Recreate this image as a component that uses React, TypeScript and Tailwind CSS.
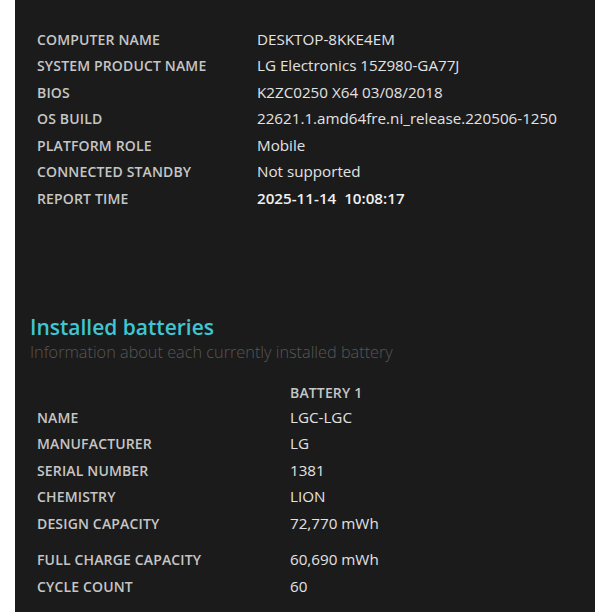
import React from 'react';

const systemInfo: [string, string][] = [
  ['COMPUTER NAME', 'DESKTOP-8KKE4EM'],
  ['SYSTEM PRODUCT NAME', 'LG Electronics 15Z980-GA77J'],
  ['BIOS', 'K2ZC0250 X64 03/08/2018'],
  ['OS BUILD', '22621.1.amd64fre.ni_release.220506-1250'],
  ['PLATFORM ROLE', 'Mobile'],
  ['CONNECTED STANDBY', 'Not supported'],
];

const batteryInfo: [string, string][] = [
  ['NAME', 'LGC-LGC'],
  ['MANUFACTURER', 'LG'],
  ['SERIAL NUMBER', '1381'],
  ['CHEMISTRY', 'LION'],
  ['DESIGN CAPACITY', '72,770 mWh'],
];

const batteryInfo2: [string, string][] = [
  ['FULL CHARGE CAPACITY', '60,690 mWh'],
  ['CYCLE COUNT', '60'],
];

function Row({ label, value, labelWidth, bold }: { label: string; value: string; labelWidth: string; bold?: boolean }) {
  return (
    <div className="flex items-center h-[26.5px]">
      <div className={`${labelWidth} shrink-0 text-[14px] font-semibold text-[#c6c6c6] tracking-[0.15px]`}>{label}</div>
      <div className={`text-[15.2px] whitespace-pre ${bold ? 'font-semibold text-[#f0f0f0]' : 'text-[#e2e2e2]'}`}>{value}</div>
    </div>
  );
}

export default function App() {
  return (
    <div className="w-[612px] h-[612px] bg-white overflow-hidden" style={{ fontFamily: '"Open Sans", "Noto Sans", sans-serif' }}>
      <div className="ml-[15px] w-[580px] h-full bg-[#1b1b1b] pt-[26px]">
        {/* system info */}
        <div className="pl-[22px]">
          {systemInfo.map(([l, v]) => (
            <Row key={l} label={l} value={v} labelWidth="w-[220px]" />
          ))}
          <Row label="REPORT TIME" value="2025-11-14  10:08:17" labelWidth="w-[220px]" bold />
        </div>

        {/* batteries */}
        <div className="pl-[15px] mt-[102px]">
          <h2 className="text-[21px] leading-[26px] text-[#3fc6d2] font-semibold">Installed batteries</h2>
          <p className="text-[16.3px] leading-[24px] text-[#575757] font-light">Information about each currently installed battery</p>
        </div>

        <div className="pl-[22px] mt-[18px]">
          <div className="flex items-center h-[22.5px]">
            <div className="w-[253px] shrink-0" />
            <div className="text-[14px] font-semibold text-[#c6c6c6] tracking-[0.15px]">BATTERY 1</div>
          </div>
          {batteryInfo.map(([l, v]) => (
            <Row key={l} label={l} value={v} labelWidth="w-[253px]" />
          ))}
          <div className="h-[10px]" />
          {batteryInfo2.map(([l, v]) => (
            <Row key={l} label={l} value={v} labelWidth="w-[253px]" />
          ))}
        </div>
      </div>
    </div>
  );
}
